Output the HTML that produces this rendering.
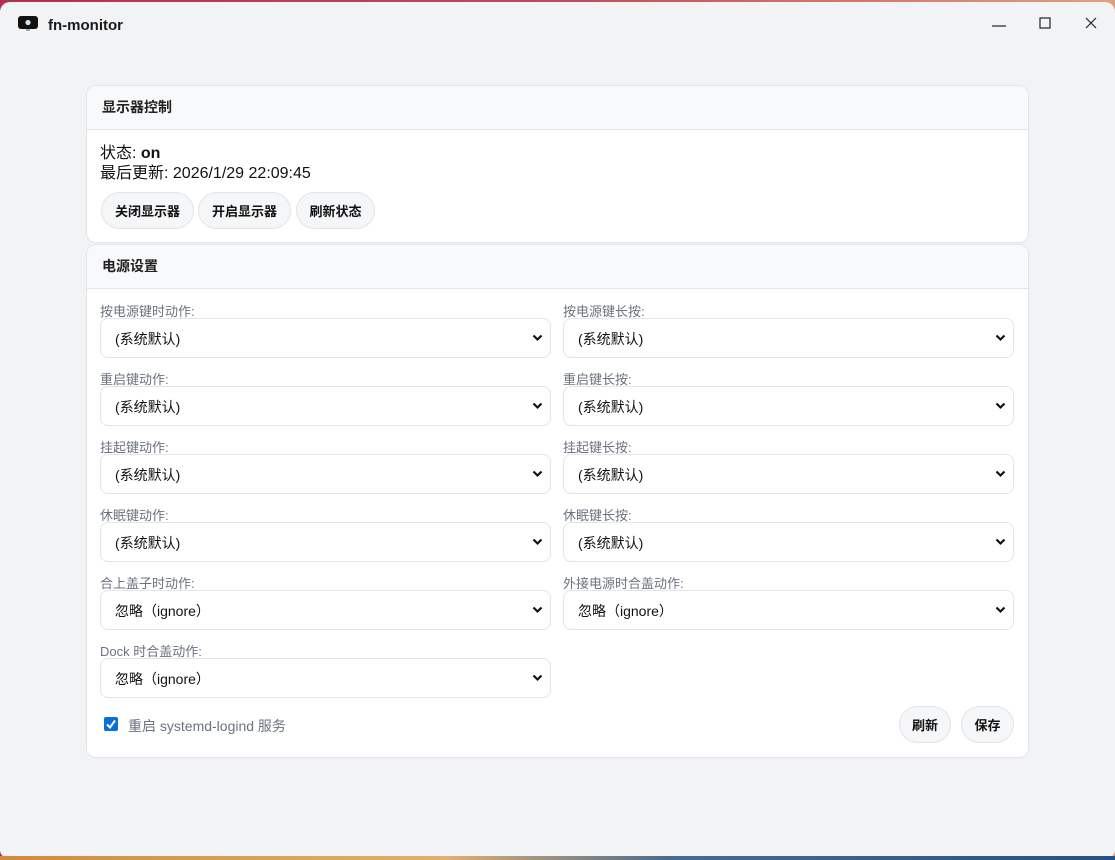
<!DOCTYPE html>
<html><head><meta charset="utf-8">
<style>
*{box-sizing:border-box;margin:0;padding:0}
html,body{width:1115px;height:860px;overflow:hidden}
body{background:linear-gradient(90deg,#b03050,#c04a5a 50%,#e0a080);font-family:"Liberation Sans","Noto Sans CJK SC",sans-serif;position:relative;color:#111}
.win{position:absolute;left:0;top:2px;width:1115px;height:856px;background:#f2f3f5;border-radius:10px 10px 8px 8px}
.bottom{position:absolute;left:0;top:856px;width:1115px;height:4px;background:linear-gradient(90deg,#d08a40,#e0b070 40%,#4a6a90 60%,#2a5080)}
.abs{position:absolute}
.title{left:48px;top:15px;font-size:15px;font-weight:bold;color:#1a1a1a}
.card{position:absolute;left:86px;width:943px;background:#fff;border:1px solid #e3e5e8;border-radius:10px;overflow:hidden}
.ch{height:44px;background:#f8f9fa;border-bottom:1px solid #e3e5e8;padding:11px 15px;font-size:14px;font-weight:bold;color:#222}
.btn{position:absolute;height:37px;border:1px solid #e2e4e8;border-radius:19px;background:#f5f6f8;font-size:13px;font-weight:bold;display:flex;align-items:center;justify-content:center;color:#111}
.lbl{position:absolute;font-size:13px;color:#6b7280}
.sel{position:absolute;width:451px;height:40px;border:1px solid #e3e5e8;border-radius:8px;background:#fff;font-size:14px;padding:10px 14px;color:#111}
.sel svg{position:absolute;right:7px;top:15px}
</style></head><body>
<div class="win">
<svg class="abs" style="left:17px;top:13px" width="22" height="18" viewBox="0 0 22 18"><rect x="1" y="1" width="20" height="13" rx="3" fill="#111"/><circle cx="11" cy="7.5" r="2.6" fill="#cfe0f5"/><rect x="9" y="14" width="4" height="2" fill="#9ab"/></svg>
<div class="abs title">fn-monitor</div>
<svg class="abs" style="left:992px;top:17px" width="14" height="14"><line x1="0" y1="7" x2="14" y2="7" stroke="#222" stroke-width="1.2"/></svg>
<svg class="abs" style="left:1039px;top:15px" width="12" height="12"><rect x="1" y="1" width="10" height="10" fill="none" stroke="#222" stroke-width="1.2"/></svg>
<svg class="abs" style="left:1085px;top:15px" width="12" height="12"><path d="M1 1L11 11M11 1L1 11" stroke="#222" stroke-width="1.2"/></svg>
</div>
<div class="bottom"></div>

<div class="card" style="top:85px;height:158px">
<div class="ch">显示器控制</div>
<div class="abs" style="left:13px;top:58px;font-size:16px;line-height:20px">状态: <b>on</b><br>最后更新: 2026/1/29 22:09:45</div>
<div class="btn" style="left:14px;top:106px;width:93px">关闭显示器</div>
<div class="btn" style="left:111px;top:106px;width:93px">开启显示器</div>
<div class="btn" style="left:209px;top:106px;width:79px">刷新状态</div>
</div>

<div class="card" style="top:244px;height:514px">
<div class="ch">电源设置</div>
</div>

<div id="f"></div>
<script>
var L=[["按电源键时动作:","按电源键长按:"],["重启键动作:","重启键长按:"],["挂起键动作:","挂起键长按:"],["休眠键动作:","休眠键长按:"],["合上盖子时动作:","外接电源时合盖动作:"],["Dock 时合盖动作:",null]];
var h="",chev='<svg width="11" height="8" viewBox="0 0 11 8"><path d="M1.5 1.5L5.5 5.5L9.5 1.5" fill="none" stroke="#111" stroke-width="2.2"/></svg>';
L.forEach(function(r,i){var y=318+i*68;r.forEach(function(t,j){if(!t)return;var x=j?563:100;var v=i>=4?"忽略（ignore）":"(系统默认)";
h+='<div class="lbl" style="left:'+x+'px;top:'+(y-17)+'px">'+t+'</div><div class="sel" style="left:'+x+'px;top:'+y+'px">'+v+chev+'</div>';});});
document.getElementById("f").innerHTML=h;
</script>
<svg class="abs" style="left:104px;top:717px" width="14" height="14"><rect width="14" height="14" rx="2" fill="#0b6fd6"/><path d="M3 7.5L6 10.5L11 3.5" fill="none" stroke="#fff" stroke-width="2"/></svg>
<div class="lbl" style="left:128px;top:716px;font-size:14px">重启 systemd-logind 服务</div>
<div class="btn" style="left:899px;top:706px;width:52px">刷新</div>
<div class="btn" style="left:961px;top:706px;width:53px">保存</div>
</body></html>
